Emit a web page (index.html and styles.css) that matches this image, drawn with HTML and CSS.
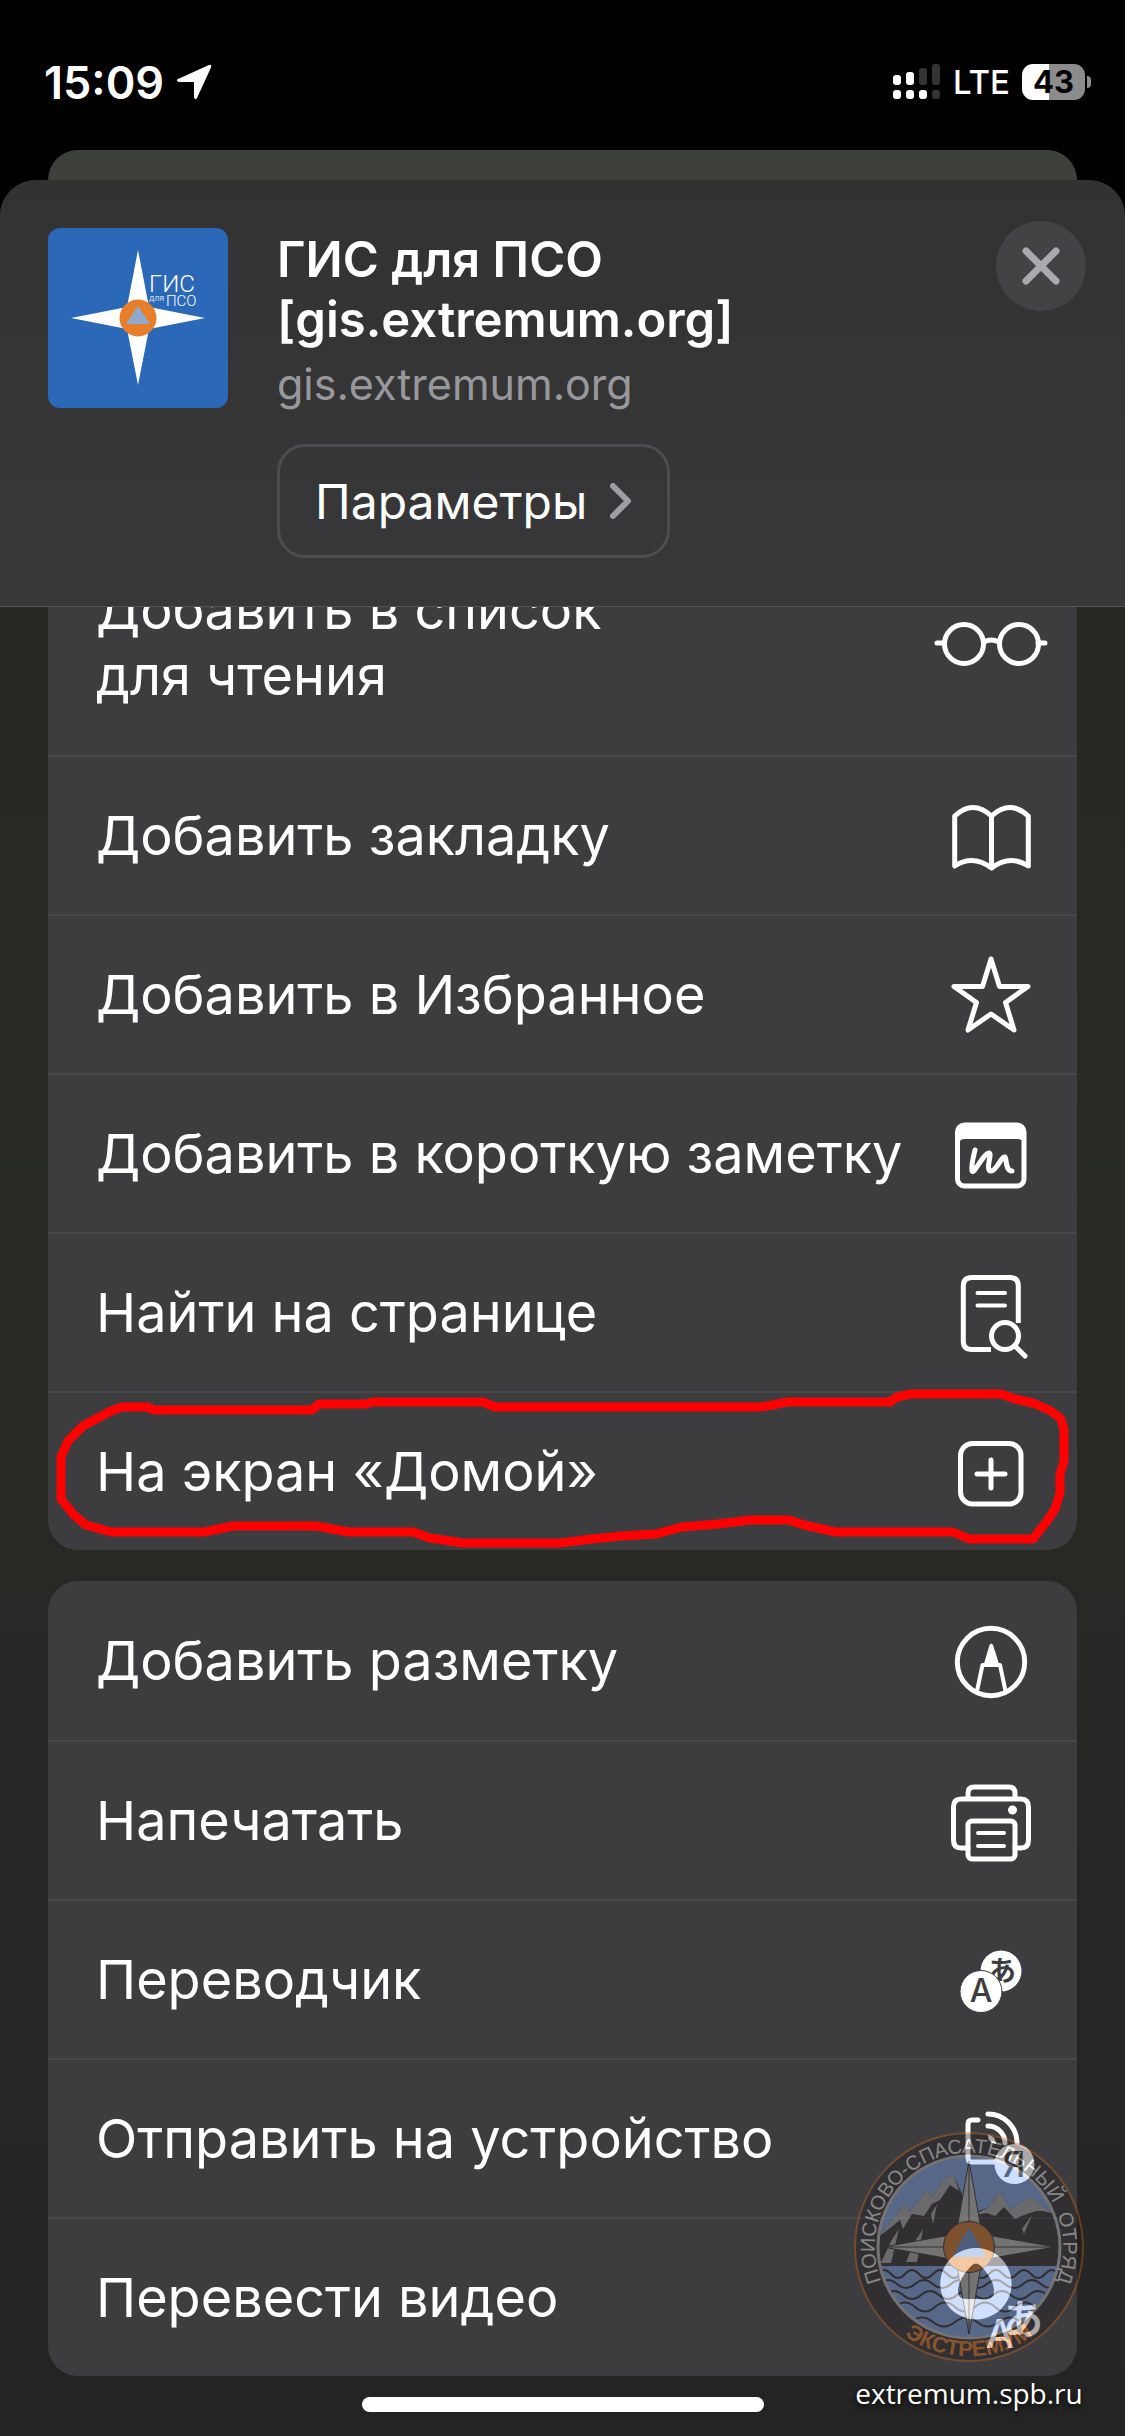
FILE: index.html
```html
<!DOCTYPE html>
<html lang="ru">
<head>
    <meta charset="UTF-8">
    <meta name="viewport" content="width=device-width, initial-scale=1.0">
    <title>ГИС для ПСО</title>
    <link rel="stylesheet" href="styles.css">
</head>
<body>
    <div class="status-bar">
        <div class="status-left">
            <span class="time">15:09</span>
            <svg class="location" viewBox="0 0 36 36"><path d="M33 1 Q36 0 35 3.500 L21 34 Q19 37 18 33 V18 H3 Q-1 17 2 15 Z"/></svg>
        </div>
        <div class="status-right">
            <svg class="signal" viewBox="0 0 48 36">
                <g fill="#fff">
                    <rect x="0" y="11" width="8" height="10" rx="3"/>
                    <rect x="13" y="8" width="8" height="13" rx="3"/>
                    <rect x="0" y="26" width="8" height="9" rx="3"/>
                    <rect x="13" y="26" width="8" height="9" rx="3"/>
                    <rect x="26" y="26" width="8" height="9" rx="3"/>
                </g>
                <g fill="#333">
                    <rect x="26" y="4" width="8" height="17" rx="3"/>
                    <rect x="39" y="0" width="8" height="21" rx="3"/>
                    <rect x="39" y="26" width="8" height="9" rx="3"/>
                </g>
            </svg>
            <span class="network">LTE</span>
            <span class="battery">43</span>
        </div>
    </div>

    <div class="back-card"></div>

    <main class="sheet">
        <header class="sheet-header">
            <svg class="app-icon" viewBox="0 0 180 180">
                <rect width="180" height="180" fill="#2b68b8"/>
                <path fill="#fff" d="M90 22 L101 79 L157 90 L101 101 L90 157 L79 101 L23 90 L79 79 Z"/>
                <circle cx="90" cy="90" r="18.500" fill="#e67e2b"/>
                <path fill="#8fa9cf" d="M90 78 L102 96 H78 Z"/>
                <g class="app-icon-text">
                    <text x="101" y="64" font-size="24">ГИС</text>
                    <text x="101" y="73" font-size="9">для</text>
                    <text x="118" y="78" font-size="15">ПСО</text>
                </g>
            </svg>
            <div class="site-info">
                <h1>ГИС для ПСО<br>[gis.extremum.org]</h1>
                <p class="site-url">gis.extremum.org</p>
                <button type="button" class="options">
                    Параметры
                    <svg class="chevron" viewBox="0 0 22 36"><path d="M3 3 L18 18 L3 33"/></svg>
                </button>
            </div>
            <button type="button" class="close" aria-label="Закрыть">
                <svg viewBox="0 0 38 38"><path d="M4 4 L34 34 M34 4 L4 34"/></svg>
            </button>
        </header>

        <div class="actions">
            <div class="group group-scrolled">
                <button type="button" class="row">
                    <span>Добавить в список<br>для чтения</span>
                    <svg class="icon" viewBox="0 0 114 114">
                        <circle cx="30" cy="58" r="19.500"/>
                        <circle cx="85" cy="58" r="19.500"/>
                        <path d="M50 56 Q57 52 65 56 M3 57 H10 M104 57 H111"/>
                    </svg>
                </button>
                <button type="button" class="row">
                    <span>Добавить закладку</span>
                    <svg class="icon" viewBox="0 0 114 114">
                        <path d="M20.700 87 V37 Q39 20 57.500 37 Q76 20 94.300 37 V87 Q76 75 57.500 89 Q39 75 20.700 87 Z M57.500 37 V88"/>
                    </svg>
                </button>
                <button type="button" class="row">
                    <span>Добавить в Избранное</span>
                    <svg class="icon" viewBox="0 0 114 114">
                        <path d="M57 21 L65.500 48.500 H94 L71.500 64.500 L80 92 L57 76 L34 92 L42.500 64.500 L20 48.500 H48.500 Z"/>
                    </svg>
                </button>
                <button type="button" class="row">
                    <span>Добавить в короткую заметку</span>
                    <svg class="icon" viewBox="0 0 114 114">
                        <rect x="23.500" y="28" width="66.500" height="61" rx="7"/>
                        <path class="solid" d="M24 42 V35 Q24 28 31 28 H83 Q90 28 90 35 V42 L87 43 Q86 42 83 42 H31 Q27 42 26 44 Z"/>
                        <path d="M41 53 C39 61 37 70 38 74 C40 78 50 55 55.500 56 C58 57 51 74 57 74 C63 74 67 59 71 60 C73 62 71 74 78 74"/>
                    </svg>
                </button>
                <button type="button" class="row">
                    <span>Найти на странице</span>
                    <svg class="icon" viewBox="0 0 114 114">
                        <path class="butt" d="M84.300 67 V30 Q84.300 21.500 76 21.500 H38 Q29.300 21.500 29.300 30 V85 Q29.300 93.500 38 93.500 H57"/>
                        <path class="thin" d="M43.500 37 H71 M43.500 49.500 H71"/>
                        <circle cx="71" cy="80" r="13.500"/>
                        <path d="M81 90 L91 100"/>
                    </svg>
                </button>
                <button type="button" class="row">
                    <span>На экран «Домой»</span>
                    <svg class="icon" viewBox="0 0 114 114">
                        <rect x="26.500" y="28.500" width="60.500" height="60.500" rx="12"/>
                        <path d="M57 45 V73 M43 59 H71"/>
                    </svg>
                    <!-- red marker outline -->
                    <svg class="marker" viewBox="0 0 1029 159" preserveAspectRatio="none">
                        <path d="M13 66 L20 50 L35 35 L63 20 L74 16 H99 L106 19 H264 L271 13 H318 L324 11 H435 L447 16 H713 L740 11 H842 L849 6 L863 3 H953 L967 8 L985 12 L1003 20 L1013 28 L1016 38 V70 L1012 84 V102 L1007 118 L999 130 L985 148 H921 L905 141 H788 L756 134 L741 129 H702 L670 133 L634 136 L608 143 L573 145 L544 148 L512 152 H415 L382 147 L365 141 H301 L268 135 H185 L156 141 H63 L38 134 L26 124 L13 108 Z"/>
                    </svg>
                </button>
            </div>

            <div class="group">
                <button type="button" class="row">
                    <span>Добавить разметку</span>
                    <svg class="icon" viewBox="0 0 114 114">
                        <circle cx="57" cy="58" r="33.700"/>
                        <path class="thin" d="M43 87 L48.500 61 H66 L71.500 87"/>
                        <path class="solid" d="M55.500 41 Q57.300 38 59 41 L66 63 H49 Z"/>
                    </svg>
                </button>
                <button type="button" class="row">
                    <span>Напечатать</span>
                    <svg class="icon" viewBox="0 0 114 114">
                        <path d="M34 84 H27 Q19.500 84 19.500 76 V43 Q19.500 35 27 35 H87 Q94.500 35 94.500 43 V76 Q94.500 84 87 84 H81"/>
                        <path d="M34 34 V29 Q34 23 40 23 H75 Q81 23 81 29 V34"/>
                        <rect x="34" y="57" width="47" height="38" rx="4"/>
                        <path class="thin" d="M44 69 H70 M44 82 H70"/>
                        <circle class="solid" cx="78.500" cy="46" r="4.500"/>
                    </svg>
                </button>
                <button type="button" class="row">
                    <span>Переводчик</span>
                    <svg class="icon" viewBox="0 0 114 114">
                        <circle class="solid" cx="67" cy="48" r="20.500"/>
                        <text class="glyph-dark kana" x="68" y="58" font-size="28">あ</text>
                        <circle class="badge" cx="47" cy="68.500" r="21"/>
                        <text class="glyph-dark" x="47" y="79" font-size="32">A</text>
                    </svg>
                </button>
                <button type="button" class="row">
                    <span>Отправить на устройство</span>
                    <svg class="icon" viewBox="0 0 114 114">
                        <path d="M44 38 H38 Q34 38 34 42 V76 Q34 80 38 80 H66"/>
                        <path d="M54 32 A29 29 0 0 1 83 61 M54 44 A17 17 0 0 1 71 61"/>
                        <path class="solid" d="M54 53 Q62 54 62 62 Q54 61 54 53 Z"/>
                        <circle class="solid" cx="80.500" cy="82" r="20"/>
                        <text class="glyph-dark" x="80" y="95" font-size="35">Я</text>
                    </svg>
                </button>
                <button type="button" class="row">
                    <span>Перевести видео</span>
                    <svg class="icon" viewBox="0 0 114 114">
                        <path class="solid" fill-rule="evenodd" d="M42 7 A35.700 35.700 0 1 1 41.900 7 Z M37 25 Q42 20 47 25 Q60 39 60 50 Q60 58 52 58 H32 Q24 58 24 50 Q24 39 37 25 Z"/>
                        <text class="glyph-light" x="66" y="107" font-size="40">A</text>
                        <text class="glyph-light kana" x="89" y="93" font-size="40">あ</text>
                    </svg>
                </button>
            </div>

            <a class="edit-actions" href="#">Править действия…</a>

            <div class="watermark">
                <svg class="emblem" viewBox="0 0 232 232">
                    <defs>
                        <clipPath id="inner"><circle cx="116" cy="116" r="90"/></clipPath>
                        <path id="ring-top" d="M34 162.500 A94.300 94.300 0 1 1 198 162.500"/>
                        <path id="ring-bottom" d="M18.500 165.500 A109.300 109.300 0 0 0 213.500 165.500"/>
                    </defs>
                    <circle cx="116" cy="116" r="114" fill="#1f1a1c" stroke="#c9651c" stroke-width="2"/>
                    <g clip-path="url(#inner)">
                        <rect width="232" height="232" fill="#81acff"/>
                        <path fill="#1f1a1c" d="M26 105 L43 84 L52 73 L57 80 L74 59 L79 66 L91 48 L101 44 L108 61 L121 82 L136 76 L147 61 L157 79 L177 66 L199 82 L212 110 V135 H20 Z"/>
                        <path fill="#b5b5b5" d="M26 105 L43 84 L52 73 L57 80 L74 59 L79 66 L91 48 L101 44 L106 60 L97 54 L87 69 L79 73 L71 85 L59 83 L50 98 L47 89 L32 101 Z M121 84 L136 76 L147 61 L157 79 L177 66 L199 82 L190 80 L183 80 L171 84 L162 88 L151 76 L142 85 L134 82 Z M46 98 L38 132 H28 L38 110 Z M70 98 L64 131 H53 L61 112 Z M84 73 L80 93 L78 83 Z M179 84 L171 103 L169 98 Z"/>
                        <g fill="none" stroke="#1f1a1c" stroke-width="2">
                            <path d="M24 143 q7 -8 14 0 t14 0 t14 0 t14 0 t14 0 t14 0 t14 0 t14 0 t14 0 t14 0 t14 0 t14 0 t14 0 t14 0"/>
                            <path d="M26 153 q9 -8 18 0 t18 0 t18 0 t18 0 t18 0 t18 0 t18 0 t18 0 t18 0 t18 0 t18 0"/>
                            <path d="M32 164 q9 -8 18 0 t18 0 t18 0 t18 0 t18 0 t18 0 t18 0 t18 0 t18 0 t18 0"/>
                            <path d="M42 176 q10 -9 20 0 t20 0 t20 0 t20 0 t20 0 t20 0 t20 0 t20 0"/>
                            <path d="M58 191 q11 -9 22 0 t22 0 t22 0 t22 0 t22 0"/>
                        </g>
                    </g>
                    <circle cx="116" cy="116" r="91" fill="none" stroke="#ccc" stroke-width="3"/>
                    <path fill="#ccc" stroke="#1f1a1c" d="M116 30 L129 103 L202 116 L129 129 L116 203 L103 129 L30 116 L103 103 Z"/>
                    <path stroke="#1f1a1c" fill="none" d="M116 30 V203 M30 116 H202"/>
                    <circle cx="116" cy="116" r="25.500" fill="#e57015" stroke="#1f1a1c" stroke-width="1"/>
                    <path fill="#6b93dd" d="M116 96 L133 126 H99 Z"/>
                    <text class="ring-text"><textPath href="#ring-top" startOffset="50%" text-anchor="middle">ПОИСКОВО-СПАСАТЕЛЬНЫЙ&nbsp; ОТРЯД</textPath></text>
                    <text class="ring-name"><textPath href="#ring-bottom" startOffset="50%" text-anchor="middle">ЭКСТРЕМУМ</textPath></text>
                </svg>
                <span class="watermark-url">extremum.spb.ru</span>
            </div>
        </div>
    </main>

    <div class="home-indicator"></div>
</body>
</html>
```
FILE: styles.css
```css
* {
    box-sizing: border-box;
}

body {
    margin: 0;
    height: 100vh;
    display: flex;
    flex-direction: column;
    position: relative;
    overflow: hidden;
    background-color: #000;
    color: #fff;
    font-family: Inter, "Liberation Sans", sans-serif;
}

button {
    font-family: inherit;
    color: inherit;
    border: none;
    cursor: pointer;
}

/* status bar */
.status-bar {
    flex: none;
    height: 150px;
    padding: 14px 34px 0 44px;
    display: flex;
    justify-content: space-between;
    align-items: center;
}

.status-left,
.status-right {
    display: flex;
    align-items: center;
    gap: 12px;
}

.time {
    font-size: 45px;
    font-weight: 600;
}

.location {
    width: 36px;
    height: 36px;
    fill: #fff;
}

.signal {
    width: 48px;
    height: 36px;
}

.network {
    font-size: 33px;
    font-weight: 500;
}

.battery {
    position: relative;
    width: 63px;
    height: 36px;
    margin-right: 6px;
    border-radius: 11px;
    background: linear-gradient(to right, #fff 43%, #8c8c8c 43%);
    color: #000;
    font-size: 31px;
    font-weight: 700;
    line-height: 36px;
    text-align: center;
}

.battery::after {
    content: "";
    position: absolute;
    right: -6px;
    top: 12px;
    width: 4px;
    height: 12px;
    border-radius: 0 4px 4px 0;
    background-color: #8c8c8c;
}

/* sheet */
.back-card {
    flex: none;
    height: 66px;
    margin: 0 48px -36px;
    border-radius: 30px 30px 0 0;
    background-color: #3e403c;
}

.sheet {
    flex: 1;
    min-height: 0;
    display: flex;
    flex-direction: column;
    position: relative;
    border-radius: 36px 36px 0 0;
    overflow: hidden;
    background: linear-gradient(#262622, #282a25 50%, #242424);
}

.sheet-header {
    flex: none;
    display: flex;
    align-items: flex-start;
    padding: 41px 39px 48px 48px;
    border-bottom: 1px solid #545456;
    background: linear-gradient(#323232, #38383a);
}

.app-icon {
    flex: none;
    width: 180px;
    height: 180px;
    margin-top: 7px;
    border-radius: 12px;
}

.app-icon-text {
    fill: #fff;
    font-family: Roboto, sans-serif;
    font-weight: 300;
}

.site-info {
    flex: 1;
    padding: 9px 0 0 49px;
}

h1 {
    margin: 0;
    font-size: 49px;
    font-weight: 600;
    line-height: 60px;
}

.site-url {
    margin: 6px 0 32px;
    color: #98989c;
    font-size: 43px;
    line-height: 56px;
}

.options {
    display: flex;
    align-items: center;
    gap: 23px;
    height: 114px;
    padding: 0 35px;
    border: 3px solid #4d4d4f;
    border-radius: 28px;
    background: none;
    font-size: 48px;
}

.chevron {
    width: 22px;
    height: 36px;
    fill: none;
    stroke: #9d9da2;
    stroke-width: 6;
    stroke-linecap: round;
    stroke-linejoin: round;
}

.close {
    flex: none;
    width: 90px;
    height: 90px;
    padding: 26px;
    border-radius: 50%;
    background-color: #434346;
}

.close svg {
    display: block;
    width: 38px;
    height: 38px;
    fill: none;
    stroke: #aaa9af;
    stroke-width: 7;
    stroke-linecap: round;
}

/* list of actions */
.actions {
    flex: 1;
    min-height: 0;
    padding: 0 48px;
    overflow: hidden;
    position: relative;
}

.group {
    margin-bottom: 31px;
    border-radius: 30px;
    overflow: hidden;
    background-color: #3d3d3f;
}

/* the list is scrolled a little under the header */
.group-scrolled {
    margin-top: -76px;
}

.row {
    display: flex;
    align-items: center;
    justify-content: space-between;
    position: relative;
    width: 100%;
    min-height: 159px;
    padding: 0 29px 0 48px;
    background: none;
    font-size: 54px;
    line-height: 66px;
    text-align: left;
}

.group-scrolled .row:first-child {
    padding-top: 46px;
    padding-bottom: 46px;
}

.row + .row {
    border-top: 2px solid #48484a;
}

.icon {
    flex: none;
    width: 114px;
    height: 114px;
    fill: none;
    stroke: #fff;
    stroke-width: 5;
    stroke-linecap: round;
    stroke-linejoin: round;
}

.icon .solid {
    fill: #fff;
    stroke: none;
}

.icon .thin {
    stroke-width: 4;
}

.icon .butt {
    stroke-linecap: butt;
}

.icon .badge {
    fill: #fff;
    stroke: #3d3d3f;
    stroke-width: 1;
}

.icon text {
    stroke: none;
    text-anchor: middle;
    font-weight: 500;
}

.icon .kana {
    font-family: "Noto Sans CJK JP", sans-serif;
    font-weight: 700;
}

.glyph-dark {
    fill: #3d3d3f;
}

.glyph-light {
    fill: #fff;
}

.marker {
    position: absolute;
    left: 0;
    top: -2px;
    width: 100%;
    height: 159px;
    overflow: visible;
    fill: none;
    stroke: #f00;
    stroke-width: 9;
    stroke-linejoin: round;
}

.edit-actions {
    display: block;
    margin-top: 50px;
    color: #7fb2f5;
    font-size: 50px;
    line-height: 60px;
    text-align: center;
    text-decoration: none;
}

/* emblem over the list */
.watermark {
    position: absolute;
    right: 40px;
    top: 1524px;
    display: flex;
    flex-direction: column;
    align-items: center;
}

.emblem {
    width: 232px;
    height: 232px;
    opacity: 0.38;
}

.ring-text {
    fill: #fff;
    font-family: "Liberation Sans", sans-serif;
    font-size: 20px;
}

.ring-name {
    fill: #ff7a12;
    font-family: "Liberation Sans", sans-serif;
    font-size: 22px;
    font-weight: 700;
}

.watermark-url {
    margin-top: 8px;
    font-family: "Open Sans", sans-serif;
    font-size: 28px;
    line-height: 44px;
    text-shadow: 0 2px 6px #000;
}

.home-indicator {
    position: absolute;
    left: 50%;
    bottom: 24px;
    width: 402px;
    height: 15px;
    margin-left: -201px;
    border-radius: 8px;
    background-color: #fff;
}
```
